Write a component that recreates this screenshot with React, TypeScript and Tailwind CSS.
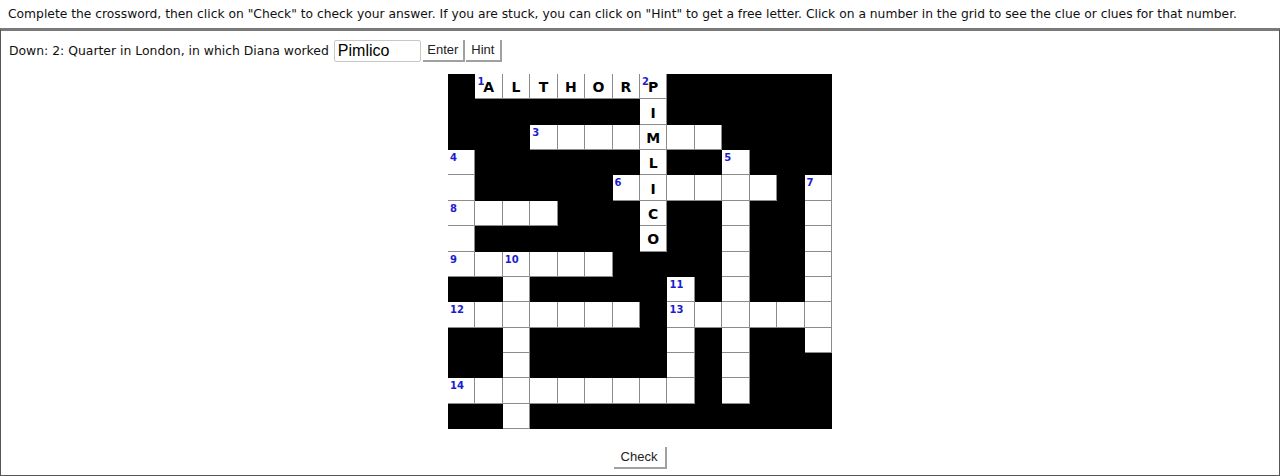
import React from 'react';

// 14 x 14 crossword. '#' = black, '.' = empty white, letter = filled white
const layout = [
  '#ALTHORP######',
  '#######I######',
  '###....M..####',
  '.######L##.###',
  '.#####.I....#.',
  '....###C##.##.',
  '.######O##.##.',
  '......####.##.',
  '##.#####.#.##.',
  '.......#......',
  '##.#####.#.##.',
  '##.#####.#.###',
  '.........#.###',
  '##.###########',
];

const numbers: Record<string, number> = {
  '0-1': 1,
  '0-7': 2,
  '2-3': 3,
  '3-0': 4,
  '3-10': 5,
  '4-6': 6,
  '4-13': 7,
  '5-0': 8,
  '7-0': 9,
  '7-2': 10,
  '8-8': 11,
  '9-0': 12,
  '9-8': 13,
  '12-0': 14,
};

function Cell({ ch, num }: { ch: string; num?: number }) {
  if (ch === '#') return <div className="bg-black" />;
  return (
    <div className="relative bg-white border-r border-b border-[#8c8c8c] flex items-center justify-center">
      {num !== undefined && (
        <span className="absolute left-[2px] top-[3px] text-[10px] leading-none font-bold text-[#1c1ccf]">{num}</span>
      )}
      {ch !== '.' && <span className="text-[14px] font-bold text-black leading-none mt-[2px]">{ch}</span>}
    </div>
  );
}

export default function App() {
  return (
    <div className="w-[1280px] h-[476px] bg-white text-black font-['DejaVu_Sans',Verdana,sans-serif] overflow-hidden">
      <div className="h-[28px] px-2 flex items-center text-[12.3px] text-[#111] whitespace-nowrap">
        Complete the crossword, then click on "Check" to check your answer. If you are stuck, you can click on "Hint" to get a free letter. Click on a number in the grid to see the clue or clues for that number.
      </div>
      <div className="h-[448px] border-t-[3px] border-x border-b border-t-[#7a7a7a] border-x-[#555] border-b-[#555] flex flex-col">
        <div className="mt-[8px] px-2 h-[24px] flex items-center text-[12.4px] text-[#111] whitespace-nowrap">
          <span>Down: 2: Quarter in London, in which Diana worked</span>
          <input
            readOnly
            value="Pimlico"
            className="ml-[5px] w-[87px] h-[22px] px-[3px] border border-[#c8c8c8] rounded-[2px] text-[16px] font-['Liberation_Sans',Arial,sans-serif] text-black outline-none"
          />
          <button className="ml-[2px] w-[42px] h-[22px] bg-white border-r-2 border-b-2 border-[#a0a0a0] text-[13px] font-['Liberation_Sans',Arial,sans-serif] text-[#222]">
            Enter
          </button>
          <button className="ml-[1px] w-[36px] h-[22px] bg-white border-r-2 border-b-2 border-[#a0a0a0] text-[13px] font-['Liberation_Sans',Arial,sans-serif] text-[#222]">
            Hint
          </button>
        </div>
        <div className="mt-[11px] mx-auto w-[384px] h-[355px] bg-black grid grid-cols-14 grid-rows-14">
          {layout.map((row, r) =>
            row.split('').map((ch, c) => <Cell key={`${r}-${c}`} ch={ch} num={numbers[`${r}-${c}`]} />)
          )}
        </div>
        <div className="mt-[18px] flex justify-center">
          <button className="w-[53px] h-[22px] bg-white border-r-2 border-b-2 border-[#a0a0a0] text-[13px] font-['Liberation_Sans',Arial,sans-serif] text-[#222]">
            Check
          </button>
        </div>
      </div>
    </div>
  );
}
